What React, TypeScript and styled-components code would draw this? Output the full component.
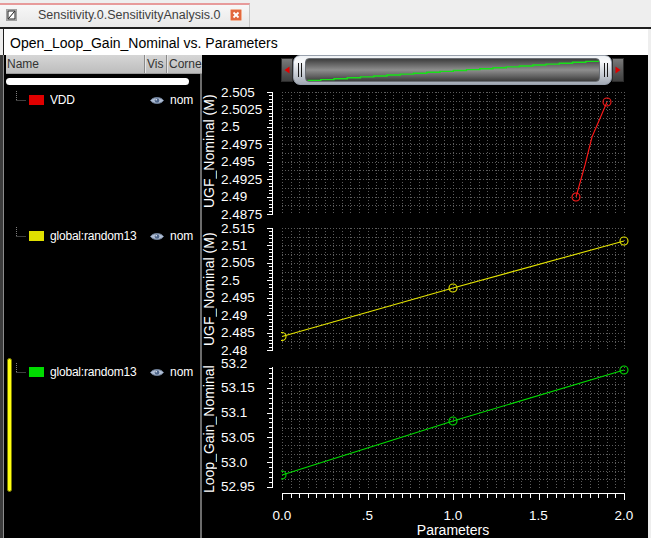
import React from 'react';
import styled, { createGlobalStyle } from 'styled-components';

const GlobalStyle = createGlobalStyle`
  html, body { margin: 0; padding: 0; background: #eeeeee; }
  body { font-family: "Liberation Sans", Arial, sans-serif; }
  * { box-sizing: border-box; }
`;

const Frame = styled.div`
  width: 651px;
  height: 538px;
  overflow: hidden;
  background: #eeeeee;
  display: flex;
  flex-direction: column;
`;

/* ---------- tab bar ---------- */
const TabBar = styled.div`
  height: 27px;
  display: flex;
  align-items: flex-start;
  background: #eeeeee;
`;

const Tab = styled.div`
  margin-top: 3px;
  width: 250px;
  height: 24px;
  border-top: 2px solid #e79a9a;
  border-right: 1px solid #c6c6c6;
  background: linear-gradient(#f7f7f7, #e8e8e8);
  display: flex;
  align-items: center;
  padding: 0 0 2px 6px;
`;

const TabLabel = styled.span`
  margin-left: 21px;
  font-size: 12.5px;
  color: #3e3e3e;
  white-space: nowrap;
  flex: 0 0 192px;
`;

const IconBox = styled.svg`
  display: block;
  flex: none;
`;

/* ---------- main panel ---------- */
const MainPanel = styled.div`
  flex: 1;
  display: flex;
  flex-direction: column;
  border-top: 2px solid #1e1e1e;
`;

const TitleBar = styled.div`
  margin-left: 3px;
  width: 645px;
  height: 26px;
  border-left: 1px solid #1e1e1e;
  background: #ffffff;
  padding: 1px 0 0 6px;
  font-size: 14px;
  line-height: 26px;
  color: #000;
  white-space: nowrap;
`;

const ContentRow = styled.div`
  width: 648px;
  height: 483px;
  display: flex;
  border-left: 3px solid #3c3c3c;
`;

/* ---------- legend list ---------- */
const ListPanel = styled.div`
  width: 199px;
  border-left: 1px solid #8c8c8c;
  background: #000;
  display: flex;
  flex-direction: column;
`;

const ListHeader = styled.div`
  margin-left: 2px;
  height: 19px;
  display: flex;
  background: linear-gradient(#d6d6d6, #bdbdbd);
  border-bottom: 1px solid #9a9a9a;
`;

const HeaderCell = styled.div<{ $w?: number; $divider?: boolean }>`
  ${(p) => (p.$w ? `flex: 0 0 ${p.$w}px;` : 'flex: 1;')}
  overflow: hidden;
  white-space: nowrap;
  font-size: 12px;
  line-height: 18px;
  color: #333;
  padding-left: ${(p) => (p.$divider ? 2 : 1)}px;
  ${(p) => (p.$divider ? 'border-left: 1px solid #8a8a8a; box-shadow: inset 1px 0 #e6e6e6;' : '')}
`;

const ListBody = styled.div`
  flex: 1;
  border-right: 2px solid #6c6c6c;
  display: flex;
  flex-direction: column;
`;

const Pill = styled.div`
  margin: 4px 0 0 2px;
  width: 183px;
  height: 7px;
  border-radius: 4px;
  background: #ffffff;
`;

const Item = styled.div<{ $h: number }>`
  height: ${(p) => p.$h}px;
  display: flex;
  align-items: flex-start;
`;

const Gutter = styled.div`
  flex: 0 0 10px;
  align-self: stretch;
`;

const SelectBar = styled.div`
  margin: 1px 0 0 3px;
  width: 5px;
  height: 134px;
  border-radius: 3px;
  background: #ffff10;
  border: 1px solid #7c7c00;
`;

const RowLine = styled.div`
  flex: 1;
  height: 30px;
  display: flex;
  align-items: center;
`;

const Swatch = styled.div<{ $c: string }>`
  margin-left: 2px;
  width: 15px;
  height: 10px;
  background: ${(p) => p.$c};
`;

const ItemName = styled.span`
  margin-left: 6px;
  flex: 0 0 100px;
  overflow: hidden;
  white-space: nowrap;
  font-size: 12px;
  letter-spacing: -0.2px;
  color: #fff;
`;

const Corner = styled.span`
  margin-left: 6px;
  font-size: 12px;
  color: #fff;
  white-space: nowrap;
`;

/* ---------- chart area ---------- */
const ChartArea = styled.div`
  width: 446px;
  background: #000;
  display: flex;
  flex-direction: column;
`;

const ScrollRow = styled.div`
  height: 30px;
  padding-left: 79px;
  display: flex;
  align-items: center;
`;

const ArrowButton = styled.div`
  width: 12px;
  height: 24px;
  border: 1px solid #2c2c2c;
  background: linear-gradient(#7a7a7a, #5a5a5a 50%, #404040);
  display: flex;
  align-items: center;
  justify-content: center;
`;

const Thumb = styled.div`
  width: 319px;
  height: 30px;
  border-radius: 7px;
  border: 1px solid #98a0ac;
  background: linear-gradient(#eef1f4, #f8f9fb 20%, #cdd2d9 60%, #a2a9b4);
  display: flex;
  align-items: center;
`;

const GripCell = styled.div`
  flex: 0 0 11px;
  display: flex;
  justify-content: center;
  gap: 2px;
`;

const GripLine = styled.div`
  width: 1px;
  height: 14px;
  background: #1a1a1a;
`;

const Channel = styled.div`
  flex: 0 0 295px;
  height: 24px;
  border-radius: 4px;
  border: 1px solid #6a6e74;
  background: linear-gradient(#3e3e3e, #6e6e6e 30%, #8e8e8e 50%, #626262 78%, #3c3c3c);
  overflow: hidden;
`;

const PlotRow = styled.div<{ $h: number }>`
  height: ${(p) => p.$h}px;
  display: flex;
  align-items: flex-start;
`;

const YTitle = styled.div<{ $span: number }>`
  flex: 0 0 15px;
  width: 15px;
  height: ${(p) => p.$span}px;
  writing-mode: vertical-rl;
  transform: rotate(180deg);
  text-align: center;
  line-height: 15px;
  font-size: 14px;
  color: #fff;
  white-space: nowrap;
`;

const PlotSvg = styled.svg`
  display: block;
  flex: none;
  overflow: visible;
  text {
    font-family: "Liberation Sans", Arial, sans-serif;
    font-size: 13.5px;
    fill: #ffffff;
  }
  .axis-title { font-size: 14px; }
`;

/* ---------- icons ---------- */
const TabGlyph = () => (
  <IconBox width="11" height="12" viewBox="0 0 11 12">
    <rect x="0.5" y="0.5" width="10" height="11" fill="#d2d2d2" stroke="#a0a0a0" />
    <rect x="2" y="2" width="7" height="8" fill="#ffffff" stroke="#222" />
    <line x1="2.5" y1="9.5" x2="8.5" y2="2.5" stroke="#111" strokeWidth="1" />
  </IconBox>
);

const CloseGlyph = () => (
  <IconBox width="12" height="12" viewBox="0 0 12 12">
    <rect x="0.5" y="0.5" width="11" height="11" rx="1" fill="#e2683e" stroke="#f3b396" />
    <line x1="3.5" y1="3.5" x2="8.5" y2="8.5" stroke="#fff" strokeWidth="1.8" />
    <line x1="8.5" y1="3.5" x2="3.5" y2="8.5" stroke="#fff" strokeWidth="1.8" />
  </IconBox>
);

const EyeGlyph = () => (
  <IconBox width="14" height="9" viewBox="0 0 14 9">
    <path d="M0.5 4.5 C3 0.6 11 0.6 13.5 4.5 C11 8.4 3 8.4 0.5 4.5 Z" fill="#b0bed4" stroke="#6e7f98" />
    <circle cx="7" cy="4.5" r="2.3" fill="#4d6488" />
    <circle cx="6.2" cy="3.7" r="0.8" fill="#eef2f8" />
  </IconBox>
);

const Connector = () => (
  <IconBox width="11" height="30" viewBox="0 0 11 30" style={{ marginLeft: 2 }}>
    <line x1="0.5" y1="6" x2="0.5" y2="15" stroke="#7c7c7c" strokeDasharray="1 1" />
    <line x1="0.5" y1="15.5" x2="10" y2="15.5" stroke="#7c7c7c" strokeDasharray="1 1" />
  </IconBox>
);

const ArrowGlyph = ({ dir }: { dir: 'l' | 'r' }) => (
  <IconBox width="8" height="10" viewBox="0 0 8 10">
    <polygon points={dir === 'l' ? '1.5,5 6.5,1.5 6.5,8.5' : '1.5,1.5 6.5,5 1.5,8.5'} fill="#e00000" />
  </IconBox>
);

const Staircase = () => {
  const n = 22;
  const x0 = 1.5, x1 = 293, y0 = 21.5, y1 = 1.5;
  let d = `M${x0} ${y0}`;
  for (let i = 1; i <= n; i++) {
    const x = x0 + ((x1 - x0) * i) / n;
    const y = y0 + ((y1 - y0) * i) / n;
    d += ` H${x.toFixed(1)} V${y.toFixed(1)}`;
  }
  return (
    <IconBox width="293" height="22" viewBox="0 0 293 22">
      <path d={d} fill="none" stroke="#18e018" strokeWidth="1.4" />
    </IconBox>
  );
};

/* ---------- plots ---------- */
type PlotSpec = {
  height: number;
  titleSpan: number;
  title: string;
  gridTop: number;
  gridBottom: number;
  labels: string[];
  labelY0: number;
  labelStep: number;
  rulerTop: number;
  rulerBottom: number;
  hStep: number;
  color: string;
  points: [number, number][];
  markers: [number, number][];
  xAxis?: boolean;
};

const GX0 = 65;
const GX1 = 407;
const XSTEP = 8.55;
const RULER_X = 55.5;

const plots: PlotSpec[] = [
  {
    height: 136, titleSpan: 133, title: 'UGF_Nominal (M)',
    gridTop: 7, gridBottom: 129,
    labels: ['2.505', '2.5025', '2.5', '2.4975', '2.495', '2.4925', '2.49', '2.4875'],
    labelY0: 7, labelStep: 17.43, rulerTop: 7, rulerBottom: 129, hStep: 8.715,
    color: '#ff1a1a',
    points: [[359, 112], [368, 80], [375, 52], [390, 17]],
    markers: [[359, 112], [390, 17]],
  },
  {
    height: 136, titleSpan: 136, title: 'UGF_Nominal (M)',
    gridTop: 7, gridBottom: 129,
    labels: ['2.515', '2.51', '2.505', '2.5', '2.495', '2.49', '2.485', '2.48'],
    labelY0: 7, labelStep: 17.43, rulerTop: 7, rulerBottom: 129, hStep: 8.715,
    color: '#e4e400',
    points: [[65, 115.5], [236, 67], [407, 20]],
    markers: [[65, 115.5], [236, 67], [407, 20]],
  },
  {
    height: 181, titleSpan: 144, title: 'Loop_Gain_Nominal',
    gridTop: 10, gridBottom: 131,
    labels: ['53.2', '53.15', '53.1', '53.05', '53.0', '52.95'],
    labelY0: 6.2, labelStep: 24.7, rulerTop: 10, rulerBottom: 129.7, hStep: 8.65,
    color: '#00dc00',
    points: [[65, 118], [236, 64], [407, 13]],
    markers: [[65, 118], [236, 64], [407, 13]],
    xAxis: true,
  },
];

const Plot = ({ spec, id }: { spec: PlotSpec; id: string }) => {
  const vLines: number[] = [];
  for (let i = 0; i <= 40; i++) vLines.push(GX0 + i * XSTEP);
  const hLines: number[] = [];
  for (let y = spec.gridTop; y <= spec.gridBottom + 0.01; y += spec.hStep) hLines.push(y);

  const ticks: { y: number; major: boolean }[] = [];
  const minor = spec.labelStep / 5;
  for (let k = 0; ; k++) {
    const y = spec.labelY0 + k * minor;
    if (y > spec.rulerBottom + 0.05) break;
    if (y >= spec.rulerTop - 0.05) ticks.push({ y, major: k % 5 === 0 });
  }
  const snap = (v: number) => Math.round(v) + 0.5;
  const pts = spec.points.map(([x, y]) => `${x},${y}`).join(' ');

  return (
    <PlotSvg width="431" height={spec.height} viewBox={`0 0 431 ${spec.height}`}>
      <defs>
        <clipPath id={id}>
          <rect x={GX0 - 1} y={-10} width={360} height={spec.height + 20} />
        </clipPath>
      </defs>
      <g stroke="#5c5c5c" strokeWidth="1" strokeDasharray="1 2" shapeRendering="crispEdges">
        {vLines.map((x, i) => (
          <line key={`v${i}`} x1={snap(x)} y1={spec.gridTop} x2={snap(x)} y2={spec.gridBottom} />
        ))}
        {hLines.map((y, i) => (
          <line key={`h${i}`} x1={GX0} y1={snap(y)} x2={GX1 + 1} y2={snap(y)} />
        ))}
      </g>
      <g stroke="#ffffff" strokeWidth="1" shapeRendering="crispEdges">
        <line x1={RULER_X} y1={Math.round(spec.rulerTop)} x2={RULER_X} y2={Math.round(spec.rulerBottom) + 1} />
        {ticks.map((t, i) => (
          <line key={i} x1={RULER_X - (t.major ? 6 : 3.5)} y1={snap(t.y)} x2={RULER_X} y2={snap(t.y)} />
        ))}
      </g>
      {spec.labels.map((l, i) => (
        <text key={l} x="4" y={spec.labelY0 + i * spec.labelStep} dominantBaseline="central">
          {l}
        </text>
      ))}
      <g clipPath={`url(#${id})`} fill="none" stroke={spec.color} strokeWidth="1.1">
        <polyline points={pts} />
        {spec.markers.map(([x, y], i) => (
          <circle key={i} cx={x} cy={y} r="4" />
        ))}
      </g>
      {spec.xAxis && (
        <>
          <g stroke="#ffffff" strokeWidth="1" shapeRendering="crispEdges">
            <line x1={GX0} y1="136.5" x2={GX1 + 1} y2="136.5" />
            {vLines.map((x, i) => (
              <line key={i} x1={snap(x)} y1="136.5" x2={snap(x)} y2={136.5 + (i % 10 === 0 ? 6.5 : 4.5)} />
            ))}
          </g>
          {['0.0', '.5', '1.0', '1.5', '2.0'].map((l, i) => (
            <text key={l} x={GX0 + i * 85.5} y="158" textAnchor="middle" dominantBaseline="central">
              {l}
            </text>
          ))}
          <text className="axis-title" x="236" y="173" textAnchor="middle" dominantBaseline="central">
            Parameters
          </text>
        </>
      )}
    </PlotSvg>
  );
};

const items = [
  { name: 'VDD', color: '#e00000', h: 136, selected: false },
  { name: 'global:random13', color: '#e0e000', h: 136, selected: false },
  { name: 'global:random13', color: '#00dc00', h: 181, selected: true },
];

export default function App() {
  return (
    <>
      <GlobalStyle />
      <Frame>
        <TabBar>
          <Tab>
            <TabGlyph />
            <TabLabel>Sensitivity.0.SensitivityAnalysis.0</TabLabel>
            <CloseGlyph />
          </Tab>
        </TabBar>
        <MainPanel>
          <TitleBar>Open_Loop_Gain_Nominal vs. Parameters</TitleBar>
          <ContentRow>
            <ListPanel>
              <ListHeader>
                <HeaderCell $w={138}>Name</HeaderCell>
                <HeaderCell $w={22} $divider>Vis</HeaderCell>
                <HeaderCell $divider>Corne</HeaderCell>
              </ListHeader>
              <ListBody>
                <Pill />
                {items.map((it, i) => (
                  <Item key={i} $h={it.h}>
                    <Gutter>{it.selected && <SelectBar />}</Gutter>
                    <RowLine>
                      <Connector />
                      <Swatch $c={it.color} />
                      <ItemName>{it.name}</ItemName>
                      <EyeGlyph />
                      <Corner>nom</Corner>
                    </RowLine>
                  </Item>
                ))}
              </ListBody>
            </ListPanel>
            <ChartArea>
              <ScrollRow>
                <ArrowButton>
                  <ArrowGlyph dir="l" />
                </ArrowButton>
                <Thumb>
                  <GripCell>
                    <GripLine />
                    <GripLine />
                  </GripCell>
                  <Channel>
                    <Staircase />
                  </Channel>
                  <GripCell>
                    <GripLine />
                    <GripLine />
                  </GripCell>
                </Thumb>
                <ArrowButton>
                  <ArrowGlyph dir="r" />
                </ArrowButton>
              </ScrollRow>
              {plots.map((p, i) => (
                <PlotRow key={i} $h={p.height}>
                  <YTitle $span={p.titleSpan}>{p.title}</YTitle>
                  <Plot spec={p} id={`clip${i}`} />
                </PlotRow>
              ))}
            </ChartArea>
          </ContentRow>
        </MainPanel>
      </Frame>
    </>
  );
}
